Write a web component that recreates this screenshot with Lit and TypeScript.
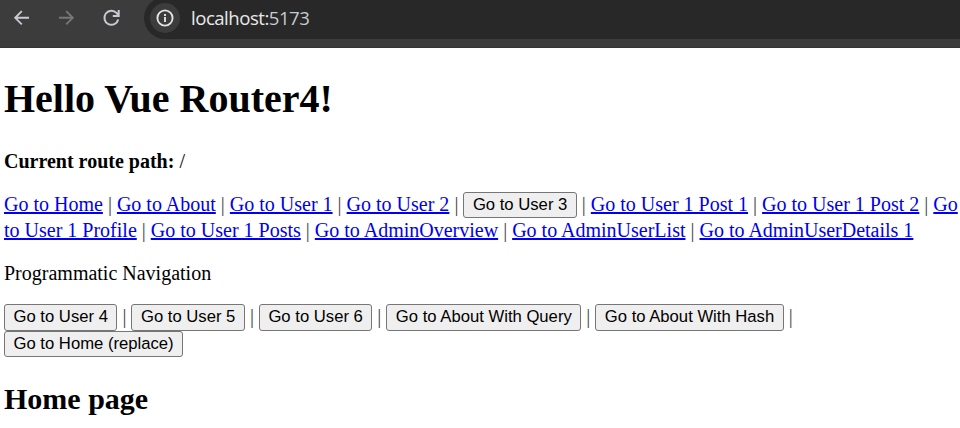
import { LitElement, html, css } from "lit";
import { customElement } from "lit/decorators.js";

@customElement("browser-bar")
class BrowserBar extends LitElement {
  static styles = css`
    :host { display: flex; box-sizing: border-box; height: 48px; background: #3c3c3c; padding-left: 11px; border-bottom: 1px solid #343434; }
    .nav { display: block; width: 22px; height: 22px; margin: 7px 23px 0 0; color: #c7cad1; flex: none; }
    .dim { color: #76777a; }
    .address { display: flex; flex: 1; height: 42px; margin: -3px 0 0 -2px; background: #282828; border-radius: 21px 0 0 21px; box-sizing: border-box; padding-left: 6px; }
    .info { display: flex; width: 30px; height: 30px; border-radius: 50%; background: #3c3c3c; align-items: center; justify-content: center; margin-top: 6px; color: #e3e3e3; }
    .url { font: 18.6px/24px "Open Sans", "Noto Sans", sans-serif; letter-spacing: -0.5px; color: #e8e8e8; margin: 9px 0 0 11px; white-space: nowrap; }
    .port { color: #c7cad1; }
  `;
  render() {
    return html`
      <svg class="nav" viewBox="0 0 22 22" fill="none" stroke="currentColor" stroke-width="1.9"><path d="M18 10.8H4.5M10.8 4.2l-6.6 6.6 6.6 6.6"/></svg>
      <svg class="nav dim" viewBox="0 0 22 22" fill="none" stroke="currentColor" stroke-width="1.9"><path d="M3 10.8h13.5M10.2 4.2l6.6 6.6-6.6 6.6"/></svg>
      <svg class="nav" viewBox="0 0 22 22" fill="none" stroke="currentColor" stroke-width="2"><path d="M17.2 12.4A7 7 0 1 1 15.7 6.2L17 7.9M17.7 3v5.9h-5.9"/></svg>
      <div class="address">
        <div class="info"><svg width="18" height="18" viewBox="0 0 18 18" fill="none" stroke="currentColor" stroke-width="1.9"><circle cx="9" cy="9" r="7.6"/><path d="M9 8v5M9 4.9v2"/></svg></div>
        <div class="url">localhost:<span class="port">5173</span></div>
      </div>`;
  }
}

@customElement("app-root")
class AppRoot extends LitElement {
  static styles = css`
    :host { display: block; height: 428px; overflow: hidden; background: #fff; color: #000; font: 20px/23px "Liberation Serif", "Times New Roman", serif; }
    main { padding-left: 4px; white-space: nowrap; }
    h1 { font-size: 40px; line-height: 46px; margin: 28px 0 28px; }
    p { margin: 0; }
    .links { margin-top: 19px; line-height: 24px; }
    .label { margin-top: 18px; }
    .actions { margin-top: 19px; }
    .row { display: flex; height: 26px; align-items: flex-start; }
    .row.tall { height: 27px; }
    .sep { white-space: pre; line-height: 24px; color: #444; }
    a { color: #0000ee; text-decoration: underline; text-decoration-thickness: 2px; }
    button { box-sizing: border-box; height: 26px; margin: 0; padding: 0 8.5px; border: 1px solid #767676; border-radius: 3px; background: #efefef; color: #000; font: 16.667px/22px "Liberation Sans", Arial, sans-serif; }
    .tall button { height: 27px; padding-bottom: 2px; }
    h2 { font-size: 30px; line-height: 34px; margin: 25px 0 0; }
  `;
  link(text: string) {
    return html`<a href="#">${text}</a>`;
  }
  sep() {
    return html`<span class="sep"> | </span>`;
  }
  render() {
    return html`
      <browser-bar></browser-bar>
      <main>
        <h1>Hello Vue Router4!</h1>
        <p><strong>Current route path:</strong> /</p>
        <nav class="links">
          <div class="row">${this.link("Go to Home")}${this.sep()}${this.link("Go to About")}${this.sep()}${this.link("Go to User 1")}${this.sep()}${this.link("Go to User 2")}${this.sep()}<button>Go to User 3</button>${this.sep()}${this.link("Go to User 1 Post 1")}${this.sep()}${this.link("Go to User 1 Post 2")}${this.sep()}${this.link("Go")}</div>
          <div class="row">${this.link("to User 1 Profile")}${this.sep()}${this.link("Go to User 1 Posts")}${this.sep()}${this.link("Go to AdminOverview")}${this.sep()}${this.link("Go to AdminUserList")}${this.sep()}${this.link("Go to AdminUserDetails 1")}</div>
        </nav>
        <p class="label">Programmatic Navigation</p>
        <div class="actions">
          <div class="row tall"><button>Go to User 4</button>${this.sep()}<button>Go to User 5</button>${this.sep()}<button>Go to User 6</button>${this.sep()}<button>Go to About With Query</button>${this.sep()}<button>Go to About With Hash</button>${this.sep()}</div>
          <div class="row"><button>Go to Home (replace)</button></div>
        </div>
        <h2>Home page</h2>
      </main>`;
  }
}
